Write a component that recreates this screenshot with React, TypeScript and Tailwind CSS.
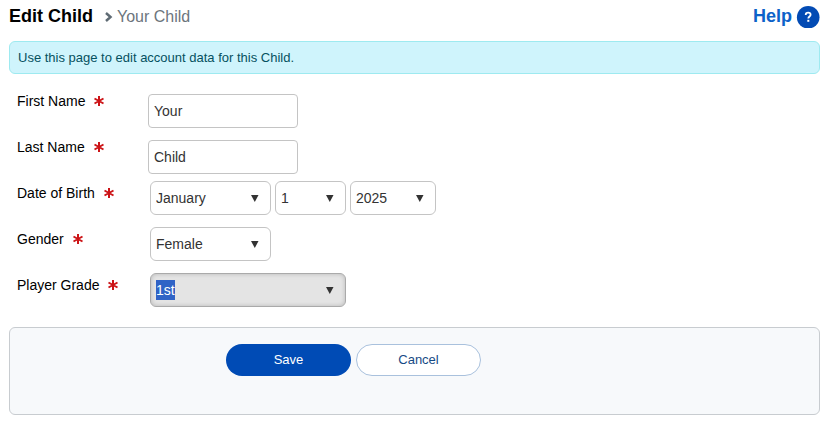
import React from 'react';

const Asterisk: React.FC = () => (
  <svg className="ml-2 h-3 w-3 shrink-0" viewBox="0 0 12 12" aria-hidden="true">
    <path
      d="M6 1v10M1.5 3.5l9 5M1.5 8.5l9-5"
      fill="none"
      stroke="#cc1417"
      strokeWidth="2"
    />
  </svg>
);

interface RowProps {
  id: string;
  label: string;
  children: React.ReactNode;
}

const Row: React.FC<RowProps> = ({ id, label, children }) => (
  <div className="flex h-[46px] items-start pl-2">
    <label htmlFor={id} className="flex w-[131px] shrink-0 items-center leading-6 text-black">
      {label}
      <Asterisk />
    </label>
    {children}
  </div>
);

interface TextFieldProps {
  id: string;
  label: string;
  value: string;
}

const TextField: React.FC<TextFieldProps> = ({ id, label, value }) => (
  <Row id={id} label={label}>
    <input
      id={id}
      type="text"
      defaultValue={value}
      className="mt-[5px] h-[34px] w-[150px] rounded border border-[#c4c4c4] bg-white px-[5px] text-[#333] outline-none"
    />
  </Row>
);

interface DropDownProps {
  id?: string;
  label?: string;
  options: string[];
  width: string;
  active?: boolean;
}

const DropDown: React.FC<DropDownProps> = ({ id, label, options, width, active }) => (
  <div className={`relative ${width}`}>
    <select
      id={id}
      aria-label={label}
      className={`h-[34px] w-full appearance-none rounded-md border px-[5px] outline-none ${
        active
          ? 'border-[#aaa] bg-[#e4e4e4] bg-[linear-gradient(#3063c6,#3063c6)] bg-[length:19px_20px] bg-[position:5px_6px] bg-no-repeat text-white shadow-[inset_0_0_4px_rgba(0,0,0,0.2)]'
          : 'border-[#c4c4c4] bg-white text-[#333]'
      }`}
    >
      {options.map((option) => (
        <option key={option}>{option}</option>
      ))}
    </select>
    <svg
      className="pointer-events-none absolute top-[14px] right-3 h-[7px] w-2"
      viewBox="0 0 8 7"
      aria-hidden="true"
    >
      <path d="M0 0h7.5L3.8 7z" fill="#333" />
    </svg>
  </div>
);

const App: React.FC = () => {
  return (
    <div className="px-2 pb-4 pl-[9px] font-['Liberation_Sans',Arial,sans-serif] text-sm">
      <header className="flex h-[41px] items-start justify-between pt-1">
        <div className="flex items-baseline leading-6">
          <h1 className="text-lg leading-6 font-bold text-black">Edit Child</h1>
          <svg className="mr-1 ml-3 h-2.5 w-2" viewBox="0 0 8 10" aria-hidden="true">
            <path d="M1 1l4.5 4L1 9" fill="none" stroke="#5f6b74" strokeWidth="2.5" />
          </svg>
          <span className="text-base leading-6 text-[#6c757d]">Your Child</span>
        </div>
        <a href="#help" className="flex items-center gap-1 text-lg leading-6 font-bold text-[#0d62c9]">
          Help
          <svg className="h-6 w-6" viewBox="0 0 24 24" aria-hidden="true">
            <circle cx="12.2" cy="13.2" r="11.3" fill="#034bb4" />
            <path
              d="M9.7 11c0-1.5 1-2.3 2.5-2.3s2.400.8 2.400 2.100c0 1.700-2.300 1.800-2.300 3.700"
              fill="none"
              stroke="#fff"
              strokeWidth="1.800"
            />
            <rect x="11.3" y="15.8" width="2" height="2" fill="#fff" />
          </svg>
        </a>
      </header>

      <p className="mb-[15px] rounded-md border border-[#9eeaf0] bg-[#cff4fc] px-2 text-[13px] leading-[31px] text-[#055160]">
        Use this page to edit account data for this Child.
      </p>

      <form>
        <TextField id="first-name" label="First Name" value="Your" />
        <TextField id="last-name" label="Last Name" value="Child" />
        <Row id="month" label="Date of Birth">
          <div className="ml-0.5 flex gap-1">
            <DropDown id="month" options={['January', 'February', 'March']} width="w-[121px]" />
            <DropDown label="Day" options={['1', '2', '3']} width="w-[71px]" />
            <DropDown label="Year" options={['2025', '2024', '2023']} width="w-[86px]" />
          </div>
        </Row>
        <Row id="gender" label="Gender">
          <div className="ml-0.5">
            <DropDown id="gender" options={['Female', 'Male']} width="w-[121px]" />
          </div>
        </Row>
        <Row id="grade" label="Player Grade">
          <div className="ml-0.5">
            <DropDown id="grade" options={['1st', '2nd', '3rd']} width="w-[196px]" active />
          </div>
        </Row>

        <div className="mt-2 flex gap-[5px] rounded-md border border-[#c8ccd0] bg-[#f7f9fb] pt-4 pb-[38px] pl-[216px] text-[13px]">
          <button type="submit" className="h-8 w-[125px] rounded-full bg-[#004bb5] text-white">
            Save
          </button>
          <button
            type="button"
            className="h-8 w-[125px] rounded-full border border-[#a9c1dd] bg-white text-[#164a85]"
          >
            Cancel
          </button>
        </div>
      </form>
    </div>
  );
};

export default App;
